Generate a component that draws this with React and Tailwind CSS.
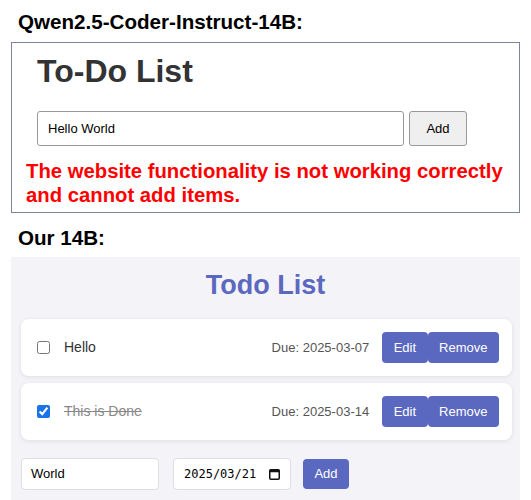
function CalendarIcon() {
  return (
    <svg width="11" height="12" viewBox="0 0 11 12" className="shrink-0">
      <rect x="0.75" y="1.75" width="9.5" height="9.5" rx="1" fill="none" stroke="#111" strokeWidth="1.5" />
      <rect x="0.75" y="1.75" width="9.5" height="2.5" fill="#111" />
    </svg>
  );
}

const todos = [
  { text: "Hello", due: "2025-03-07", done: false },
  { text: "This is Done", due: "2025-03-14", done: true },
];

export default function App() {
  return (
    <div className="w-[531px] h-[500px] overflow-hidden bg-white font-['Liberation_Sans',Arial,sans-serif] text-black">
      {/* Qwen section */}
      <h2 className="pt-[10px] pl-[18px] text-[20.6px] leading-[24px] font-bold">Qwen2.5-Coder-Instruct-14B:</h2>
      <div className="mt-[8px] ml-[11px] w-[509px] h-[171px] border border-[#7a869e] bg-white">
        <h1 className="pt-[10px] pl-[25px] text-[32px] leading-[37px] font-bold text-[#333]">To-Do List</h1>
        <div className="mt-[21px] ml-[25px] flex gap-[5px]">
          <div className="w-[367px] h-[35px] border border-[#999] rounded-[3px] flex items-center pl-[10px] text-[13px]">
            Hello World
          </div>
          <button className="w-[58px] h-[35px] border border-[#999] rounded-[3px] bg-[#efefef] text-[13px]">Add</button>
        </div>
        <p className="mt-[13px] pl-[14px] pr-[2px] text-[20.3px] leading-[24px] font-bold text-[#ff0000]">
          The website functionality is not working correctly
          <br />
          and cannot add items.
        </p>
      </div>

      {/* Our section */}
      <h2 className="mt-[13px] pl-[18px] text-[20.6px] leading-[24px] font-bold">Our 14B:</h2>
      <div className="mt-[7px] ml-[11px] w-[509px] h-[250px] bg-[#f3f3f8]">
        <h1 className="pt-[12px] text-center text-[27px] leading-[32px] font-bold text-[#5b68c0]">Todo List</h1>
        <div className="mt-[18px] flex flex-col gap-[7px]">
          {todos.map((t) => (
            <div
              key={t.text}
              className="ml-[10px] w-[491px] h-[57px] rounded-[8px] bg-white shadow-[0_1px_5px_rgba(0,0,0,0.09)] flex items-center pl-[16px] pr-[13px]"
            >
              <input
                type="checkbox"
                readOnly
                checked={t.done}
                className="w-[13px] h-[13px] m-0 accent-[#1a73e8]"
              />
              <span
                className={`ml-[14px] text-[14px] ${t.done ? "line-through text-[#888]" : "text-[#333]"}`}
              >
                {t.text}
              </span>
              <span className="ml-auto text-[13px] text-[#555]">Due: {t.due}</span>
              <div className="ml-[13px] flex">
                <button className="h-[31px] px-[11.5px] rounded-[4px] bg-[#5b68c0] text-white text-[13px]">Edit</button>
                <button className="h-[31px] px-[11.5px] rounded-[4px] bg-[#5b68c0] text-white text-[13px]">Remove</button>
              </div>
            </div>
          ))}
        </div>
        <div className="mt-[18px] ml-[10px] flex items-center">
          <div className="w-[138px] h-[32px] rounded-[4px] border border-[#dedee3] bg-white flex items-center pl-[9px] text-[13px]">
            World
          </div>
          <div className="ml-[14px] w-[118px] h-[32px] rounded-[4px] border border-[#dedee3] bg-white flex items-center pl-[10px] pr-[10px] justify-between">
            <span className="font-['DejaVu_Sans_Mono',monospace] text-[12px]">2025/03/21</span>
            <CalendarIcon />
          </div>
          <button className="ml-[12px] w-[46px] h-[30px] rounded-[4px] bg-[#5b68c0] text-white text-[13px]">Add</button>
        </div>
      </div>
    </div>
  );
}
